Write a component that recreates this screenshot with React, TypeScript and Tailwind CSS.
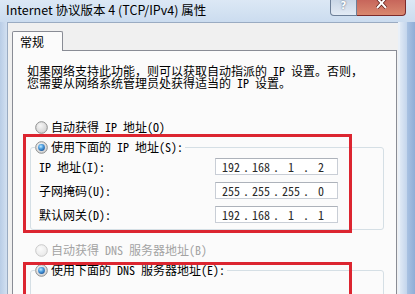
import React from "react";

type RadioState = "off" | "on" | "disabled";

const Radio = ({ state }: { state: RadioState }) => {
  const id = `rg-${state}`;
  return (
    <svg width="13" height="13" viewBox="0 0 13 13" className="shrink-0">
      <defs>
        <radialGradient id={id} cx="0.4" cy="0.35" r="0.7">
          <stop offset="0" stopColor={state === "disabled" ? "#fbfbfb" : "#f6f6f6"} />
          <stop offset="1" stopColor={state === "disabled" ? "#e8e8e8" : "#d0d0d0"} />
        </radialGradient>
        <radialGradient id={`${id}-dot`} cx="0.4" cy="0.35" r="0.75">
          <stop offset="0" stopColor="#c2ecff" />
          <stop offset="0.45" stopColor="#4d9ee0" />
          <stop offset="1" stopColor="#184f93" />
        </radialGradient>
      </defs>
      <circle
        cx="6.5"
        cy="6.5"
        r="5.8"
        fill={`url(#${id})`}
        stroke={state === "disabled" ? "#c9c9c9" : "#8e8f8f"}
        strokeWidth="1"
      />
      {state === "on" && <circle cx="6.5" cy="6.5" r="3.4" fill={`url(#${id}-dot)`} />}
    </svg>
  );
};

const RadioRow = ({ state, label }: { state: RadioState; label: string }) => (
  <div className="flex items-center h-[16px] gap-[3px]">
    <Radio state={state} />
    <span className={state === "disabled" ? "text-[#a3a3a3]" : "text-black"}>{label}</span>
  </div>
);

const IpBox = ({ parts }: { parts: string[] }) => (
  <div className="flex items-center w-[123px] h-[17px] bg-white border border-[#c9ced6] border-t-[#adb2ba] pl-[3px] text-[#2a2a2a]">
    {parts.map((p, i) => (
      <React.Fragment key={i}>
        {i > 0 && <span className="w-[6px] text-center">.</span>}
        <span className="w-[24px] text-center">{p}</span>
      </React.Fragment>
    ))}
  </div>
);

const FieldRow = ({ label, parts }: { label: string; parts: string[] }) => (
  <div className="flex items-center h-[17px] pl-[8px]">
    <span className="w-[176px]">{label}</span>
    <IpBox parts={parts} />
  </div>
);

export default function App() {
  return (
    <div className="relative w-[415px] h-[294px] overflow-hidden flex flex-col bg-[#c8d9ee] font-['Noto_Sans_Mono_CJK_SC','Noto_Sans_CJK_SC',sans-serif] text-[12px] leading-[12px]">
      {/* title bar */}
      <div className="h-[22px] shrink-0 flex items-start bg-gradient-to-b from-[#dce8f5] to-[#cbdcef]">
        <span className="pl-[6px] pt-[3px] font-['Noto_Sans_CJK_SC',sans-serif] text-[12.5px] leading-[14px] text-black">
          Internet 协议版本 4 (TCP/IPv4) 属性
        </span>
        <div className="ml-auto mr-[9px] flex">
          <div className="w-[27px] h-[16px] flex items-start justify-center rounded-bl-[4px] border border-t-0 border-[#6d7f98] bg-gradient-to-b from-[#c9d6e6] to-[#e3ebf5] text-white text-[10px] leading-[12px] font-bold font-['DejaVu_Sans',sans-serif] [text-shadow:0_0_2px_#40516b]">
            ?
          </div>
          <div className="w-[49px] h-[16px] flex items-start justify-center rounded-br-[4px] border border-t-0 border-l-0 border-[#7b2b2b] bg-gradient-to-b from-[#c7665b] to-[#d9886f]">
            <svg width="11" height="9" viewBox="0 0 11 9">
              <path d="M1 -2 L10 8 M10 -2 L1 8" stroke="#5a1b16" strokeWidth="3.4" />
              <path d="M1 -2 L10 8 M10 -2 L1 8" stroke="#ffffff" strokeWidth="2" />
            </svg>
          </div>
        </div>
      </div>

      <div className="flex flex-1 min-h-0">
        {/* left frame */}
        <div className="w-[7px] shrink-0 bg-gradient-to-r from-[#b9cde6] to-[#d2e0f1]" />

        {/* dialog panel */}
        <div className="w-[391px] shrink-0 flex flex-col bg-[#f0f0f0] border-t border-l border-[#9aabc2] pt-[8px] pl-[4px]">
          <div className="flex">
            <div className="relative z-10 -mb-px w-[51px] h-[20px] flex items-center pl-[7px] bg-[#fbfbfb] border border-b-0 border-[#898c95] rounded-t-[2px]">
              常规
            </div>
          </div>

          <div className="w-[385px] flex-1 bg-[#fbfbfb] border border-[#898c95] pl-[14px] pt-[14px]">
            <p>
              如果网络支持此功能，则可以获取自动指派的 IP 设置。否则，
              <br />
              您需要从网络系统管理员处获得适当的 IP 设置。
            </p>

            <div className="mt-[30px] pl-[8px]">
              <RadioRow state="off" label="自动获得 IP 地址(O)" />
            </div>

            <fieldset className="mt-[4px] ml-[3px] w-[354px] border border-[#d5dfe5] rounded-[3px] pb-[6px]">
              <legend className="ml-[4px] pr-[2px]">
                <RadioRow state="on" label="使用下面的 IP 地址(S):" />
              </legend>
              <div className="flex flex-col gap-[7px] pt-[3px]">
                <FieldRow label="IP 地址(I):" parts={["192", "168", "1", "2"]} />
                <FieldRow label="子网掩码(U):" parts={["255", "255", "255", "0"]} />
                <FieldRow label="默认网关(D):" parts={["192", "168", "1", "1"]} />
              </div>
            </fieldset>

            <div className="mt-[12px] pl-[8px]">
              <RadioRow state="disabled" label="自动获得 DNS 服务器地址(B)" />
            </div>

            <fieldset className="mt-[4px] ml-[3px] w-[354px] h-[60px] border border-[#d5dfe5] rounded-[3px]">
              <legend className="ml-[4px] pr-[2px]">
                <RadioRow state="on" label="使用下面的 DNS 服务器地址(E):" />
              </legend>
            </fieldset>
          </div>
        </div>

        {/* right frame */}
        <div className="flex-1 flex">
          <div className="w-[2px] bg-[#e9f0f8]" />
          <div className="w-[7px] bg-gradient-to-r from-[#dfe9f5] to-[#c3d5ec]" />
          <div className="flex-1 bg-gradient-to-r from-[#a9c2e2] to-[#8fadd6]" />
        </div>
      </div>

      {/* red annotation boxes */}
      <div className="absolute left-[23px] top-[134px] w-[329px] h-[99px] border-[3px] border-[#dc2530]" />
      <div className="absolute left-[23px] top-[262px] w-[329px] h-[60px] border-[3px] border-[#dc2530]" />
    </div>
  );
}
